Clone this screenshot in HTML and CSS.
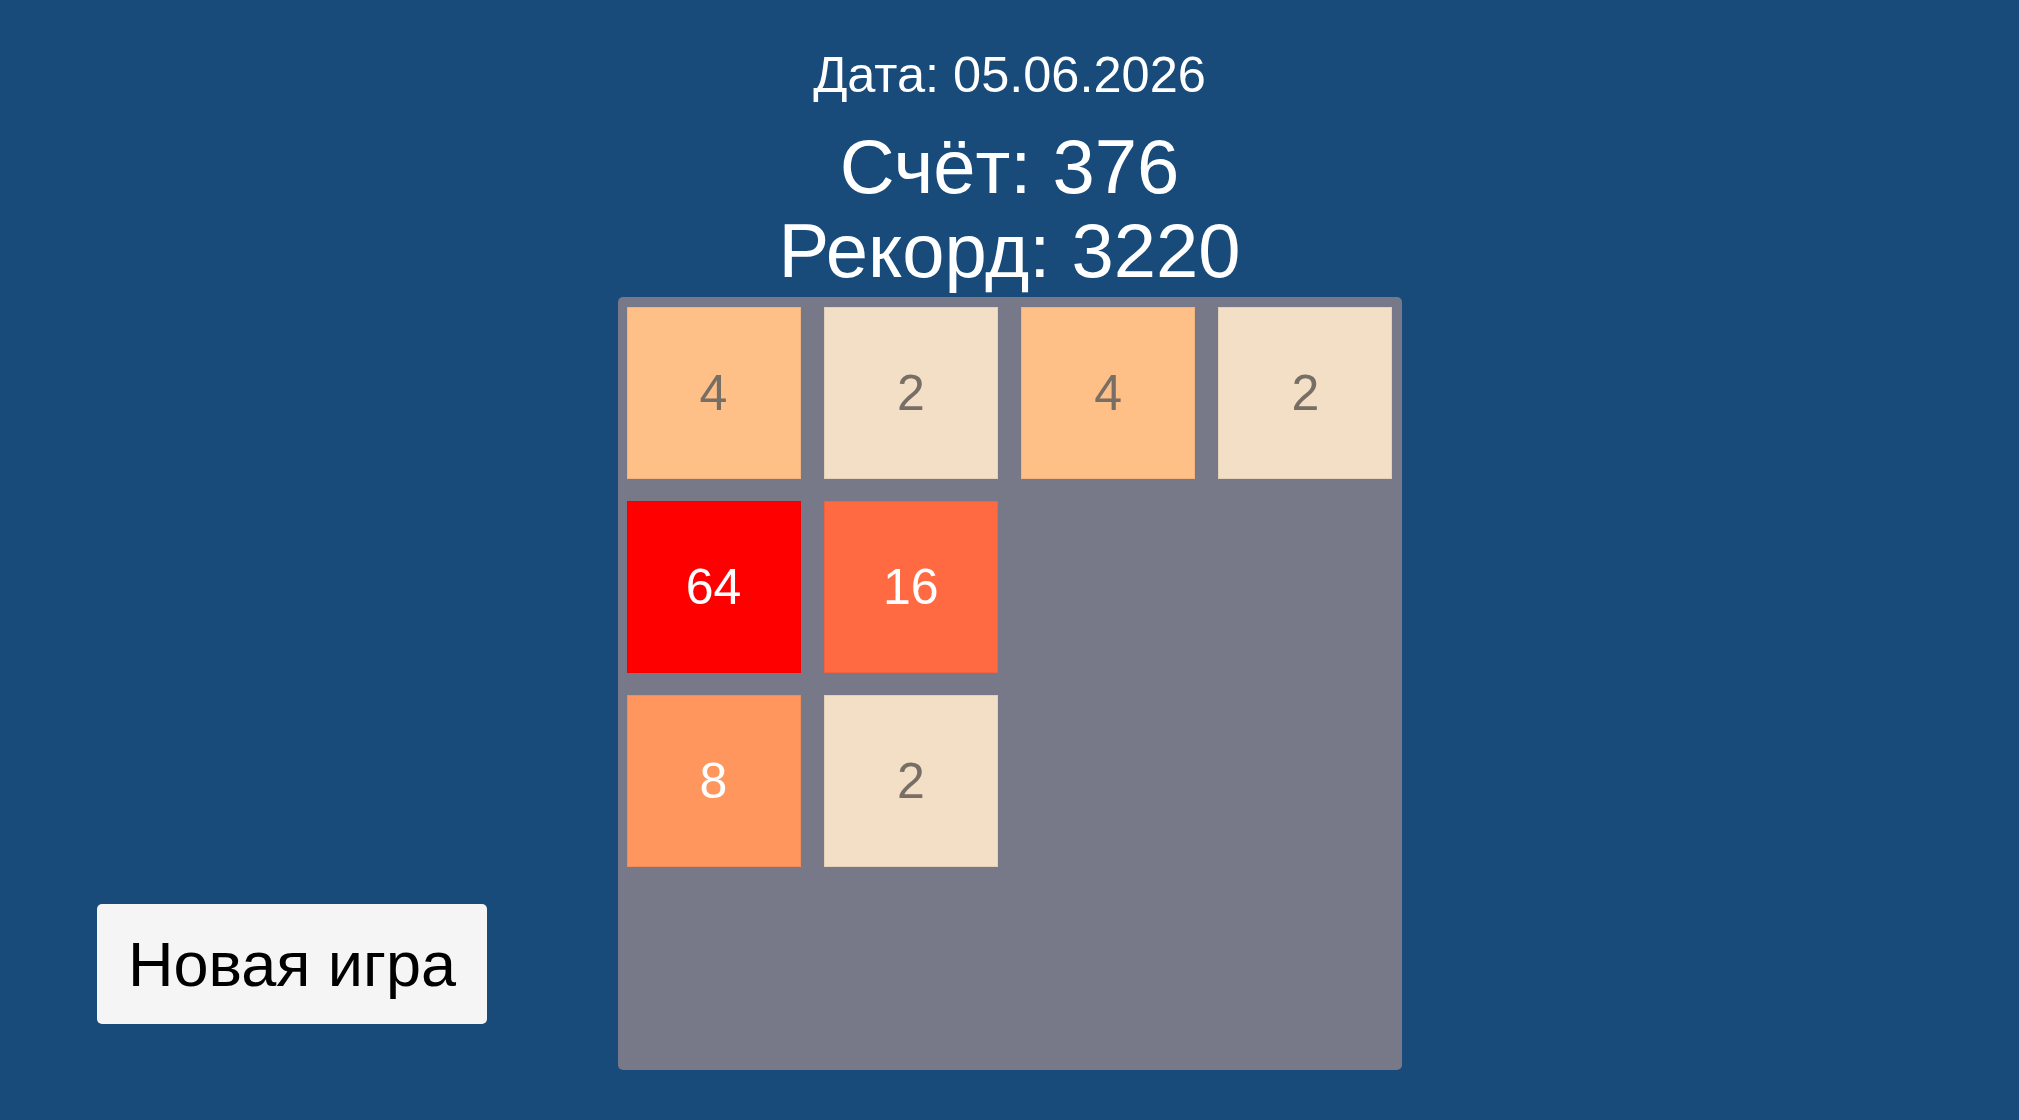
FILE: index.html
```html
<!DOCTYPE html>
<html lang="ru">
<head>
<meta charset="utf-8">
<title>2048</title>
<link rel="stylesheet" href="styles.css">
</head>
<body>
<div class="stage">
  <div class="side side-left">
    <button class="new-game">Новая игра</button>
  </div>
  <div class="center">
    <div class="date">Дата: 05.06.2026</div>
    <div class="score">Счёт: 376</div>
    <div class="record">Рекорд: 3220</div>
    <div class="board">
      <div class="tile t4">4</div>
      <div class="tile t2">2</div>
      <div class="tile t4">4</div>
      <div class="tile t2">2</div>
      <div class="tile t64">64</div>
      <div class="tile t16">16</div>
      <div class="tile empty"></div>
      <div class="tile empty"></div>
      <div class="tile t8">8</div>
      <div class="tile t2">2</div>
      <div class="tile empty"></div>
      <div class="tile empty"></div>
      <div class="tile empty"></div>
      <div class="tile empty"></div>
      <div class="tile empty"></div>
      <div class="tile empty"></div>
    </div>
  </div>
  <div class="side side-right"></div>
</div>
</body>
</html>
```
FILE: styles.css
```css
html, body {
  margin: 0;
  padding: 0;
}
body {
  width: 2019px;
  height: 1120px;
  background: #184a7a;
  font-family: "Liberation Sans", Arial, sans-serif;
  overflow: hidden;
}
.stage {
  display: grid;
  grid-template-columns: 1fr 784px 1fr;
  height: 1120px;
}
.side-left {
  display: flex;
  align-items: flex-end;
  padding-left: 97px;
  padding-bottom: 96px;
}
.center {
  display: flex;
  flex-direction: column;
  align-items: center;
  padding-top: 45px;
  color: #ffffff;
}
.date {
  font-size: 50.5px;
  line-height: 60px;
  white-space: nowrap;
}
.score {
  font-size: 76px;
  line-height: 84px;
  margin-top: 20px;
  white-space: nowrap;
}
.record {
  font-size: 76px;
  line-height: 84px;
  white-space: nowrap;
}
.board {
  margin-top: 4px;
  width: 784px;
  height: 773px;
  box-sizing: border-box;
  padding: 10px 9px 9px 9px;
  background: #777888;
  border-radius: 5px;
  display: grid;
  grid-template-columns: repeat(4, 174px);
  grid-template-rows: repeat(4, 172px);
  column-gap: 23.33px;
  row-gap: 22px;
}
.tile {
  display: flex;
  align-items: center;
  justify-content: center;
  font-size: 50px;
  color: #776e65;
  box-sizing: border-box;
  border: 1px solid rgba(0, 0, 0, 0.06);
}
.tile.empty {
  background: transparent;
  border: none;
}
.t2 { background: #f3dfc6; }
.t4 { background: #ffc088; }
.t8 { background: #ff965e; color: #ffffff; }
.t16 { background: #ff6a42; color: #ffffff; }
.t64 { background: #ff0000; color: #ffffff; }
.new-game {
  width: 390px;
  height: 120px;
  background: #f5f5f5;
  border: none;
  border-radius: 5px;
  font-family: "Liberation Sans", Arial, sans-serif;
  font-size: 63px;
  color: #000000;
  padding: 0;
  margin: 0;
}
```
